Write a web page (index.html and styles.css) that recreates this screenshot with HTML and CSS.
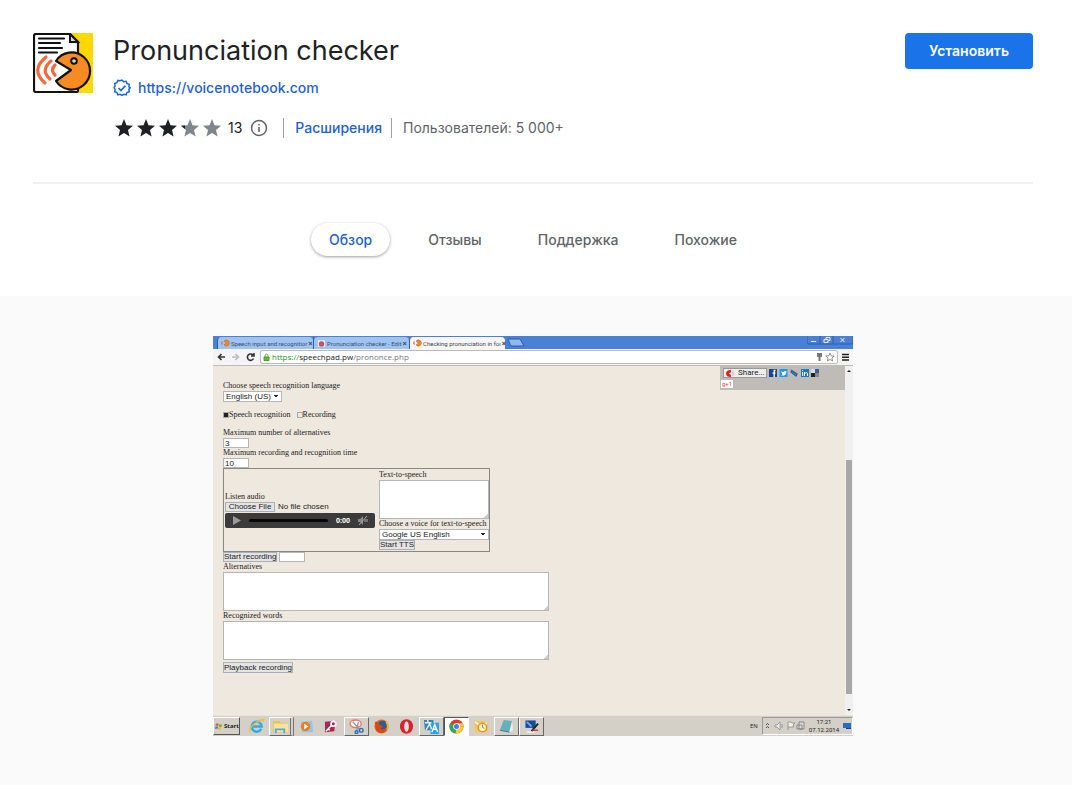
FILE: index.html
```html
<!DOCTYPE html>
<html lang="ru">
<head>
<meta charset="utf-8">
<meta name="viewport" content="width=device-width, initial-scale=1">
<title>Pronunciation checker</title>
<link rel="stylesheet" href="styles.css">
</head>
<body>
<svg class="defs" width="0" height="0" aria-hidden="true">
  <symbol id="star" viewBox="0 0 18 18"><path d="M9 0l2.500 6.200 6.500.5-5 4.300 1.600 6.500L9 14l-5.600 3.500L5 11 0 6.700l6.500-.5z"/></symbol>
  <symbol id="pac" viewBox="0 0 12 10"><path d="M4 2.500A4 4 0 1 1 4 7.500l3-2.500z" fill="#f18a22" stroke="#b35a1a" stroke-width=".6"/><path d="M2 3Q0 5 2 7" fill="none" stroke="#ef6b3c" stroke-width="1.500"/></symbol>
</svg>
<header class="top">
  <div class="item">
    <svg class="logo" viewBox="0 0 60 60" role="img" aria-label="Pronunciation checker">
      <path d="M36 0h24v60H36z" fill="#ffd800"/>
      <path d="M3 1h34l8 8v49q0 1-2 1H3q-2 0-2-2V3q0-2 2-2z" fill="#fff" stroke="#111" stroke-width="2.200"/>
      <path d="M37 1v8h8z" fill="#ddd" stroke="#111" stroke-width="2"/>
      <path d="M6 5.500h25M6 10h21M6 15h23M6 19.500h18" stroke="#111" stroke-width="2.200" stroke-linecap="round"/>
      <path d="M13 24Q-3 37 12 50M18 28Q7 37 17 46M22 32q-5 5 0 10" fill="none" stroke="#ef6b3c" stroke-width="3.200" stroke-linecap="round"/>
      <path d="M23 28a18.500 18.500 0 1 1 0 20l15-11z" fill="#f58b22" stroke="#111" stroke-width="2.200" stroke-linejoin="round"/>
      <circle cx="41" cy="28" r="2.800" fill="#ddd" stroke="#111" stroke-width="2"/>
    </svg>
    <div class="info">
      <h1>Pronunciation checker</h1>
      <a class="site" href="#site">
        <svg width="18" height="18" viewBox="0 0 18 18" fill="none" stroke="#1967d2" stroke-width="1.600"><path d="M9 1l2 1.700 2.500-.4.900 2.400 2.400.9-.4 2.500L18 9l-1.600 2 .4 2.500-2.400.8-.9 2.500-2.500-.5L9 17.500l-2-1.200-2.500.5-.9-2.500-2.400-.8.400-2.500L0.500 9l1.100-1.900-.4-2.500 2.400-.9.900-2.400 2.500.4z" transform="translate(.6 .2) scale(.93)"/><path d="M5.500 9l2.400 2.500L12.500 6.600"/></svg>
        <span>https://voicenotebook.com</span></a>
      <div class="meta">
        <span class="stars" role="img" aria-label="3 из 5">
          <svg><use href="#star"/></svg><svg><use href="#star"/></svg><svg><use href="#star"/></svg><svg viewBox="0 0 18 18"><use class="off" href="#star"/><path d="M0 6.700l4-.3V10z"/></svg><svg class="off"><use href="#star"/></svg>
        </span>
        <span class="count">13</span>
        <button class="about" aria-label="Подробнее"><svg width="18" height="18" viewBox="0 0 18 18"><circle cx="9" cy="9" r="7.500" fill="none" stroke="#5f6368" stroke-width="1.500"/><path d="M8.200 8h1.600v5H8.200zM8.200 5h1.600v1.600H8.200z" fill="#5f6368"/></svg></button>
        <a class="category" href="#extensions">Расширения</a>
        <span class="users">Пользователей: 5 000+</span>
      </div>
    </div>
    <button class="install">Установить</button>
  </div>
  <nav class="tabs">
    <a class="active" href="#overview">Обзор</a><a href="#reviews">Отзывы</a><a href="#support">Поддержка</a><a href="#related">Похожие</a>
  </nav>
</header>
<main class="gallery" id="overview">
  <section class="desktop" aria-label="Speechpad">
    <div class="titlebar">
      <div class="btab"><svg width="9" height="8"><use href="#pac"/></svg><span>Speech input and recognitior</span><b>×</b></div>
      <div class="btab"><svg width="9" height="8" viewBox="0 0 10 8"><path d="M1 1h8v7H1z" fill="#eee"/><circle cx="5" cy="5" r="3" fill="#dd4436"/><circle cx="5" cy="5" r="1.300" fill="#4c86e8"/></svg><span>Pronunciation checker - Edit</span><b>×</b></div>
      <div class="btab current"><svg width="9" height="8"><use href="#pac"/></svg><span>Checking pronunciation in foı</span><b>×</b></div>
      <svg class="newtab" width="18" height="9" viewBox="0 0 18 9"><path d="M1 1h12l4 7H5q-2 0-2-2z" fill="#91b9ef" stroke="#315da8"/></svg>
      <svg class="winbtns" width="46" height="9" viewBox="0 0 46 9" fill="none"><path d="M0 0v6q0 2 2 2h42q2 0 2-2V0M13 0v8M26 0v8" stroke="#2f5fae"/><path d="M4 5.500h5M17 3.500h4v3h-4zM19 3V1.500h4v3h-2M33.500 2l4 4M37.500 2l-4 4" stroke="#e8f0fb"/></svg>
    </div>
    <div class="toolbar">
      <svg width="39" height="10" viewBox="0 0 39 10" fill="none" stroke-width="1.600"><path d="M8 5H1.500M4.500 2l-3 3 3 3" stroke="#333"/><path d="M15 5h6.500M18.500 2l3 3-3 3" stroke="#bbb"/><path d="M36 3A3.200 3.200 0 1 0 36.500 6.500M37 1v3h-3" stroke="#333"/></svg>
      <div class="address">
        <svg width="7" height="8" viewBox="0 0 7 8"><path d="M1 4h5v3.500H1z" fill="#6ab73f" stroke="#4e9b2b"/><path d="M2 4V2q1.500-2 3 0v2" fill="none" stroke="#7ab55c"/></svg>
        <span class="url"><i>https://</i>speechpad.pw<em>/prononce.php</em></span>
        <svg width="20" height="10" viewBox="0 0 20 10"><path d="M2 1h5v4H5.500v4h-2V5H2z" fill="#777"/><path d="M15 1l1.200 2.800 3 .2-2.300 2 .7 3L15 7.400 12.400 9l.7-3-2.300-2 3-.2z" fill="#fff" stroke="#777" stroke-width=".8"/></svg>
      </div>
      <svg width="7" height="8" viewBox="0 0 7 8" stroke="#222" stroke-width="1.500"><path d="M0 1.500h7M0 4.200h7M0 7h7"/></svg>
    </div>
    <div class="viewport">
      <form class="speech">
        <label for="lang">Choose speech recognition language</label>
        <select id="lang" class="lang"><option>English (US)</option></select>
        <div class="checks"><input type="checkbox" id="sr" checked><label for="sr">Speech recognition</label><input type="checkbox" id="rec"><label for="rec">Recording</label></div>
        <label for="alts">Maximum number of alternatives</label>
        <input class="num" id="alts" value="3">
        <label for="time">Maximum recording and recognition time</label>
        <input class="num" id="time" value="10">
        <div class="panel">
          <div class="listen">
            <label for="file">Listen audio</label>
            <div class="filerow"><button type="button" id="file">Choose File</button><span>No file chosen</span></div>
            <div class="player"><svg width="9" height="9" viewBox="0 0 9 9"><path d="M1 0l8 4.500L1 9z" fill="#9b9b9b"/></svg><span class="track"></span><span class="zero">0:00</span><svg width="10" height="9" viewBox="0 0 10 9"><path d="M0 3h2l3-3v9L2 6H0z" fill="#888"/><path d="M1 9L9 0M7 3v3M9 3v3" stroke="#aaa"/></svg></div>
          </div>
          <div class="tts">
            <label for="ttstext">Text-to-speech</label>
            <textarea id="ttstext"></textarea>
            <label for="voice">Choose a voice for text-to-speech</label>
            <select id="voice"><option>Google US English</option></select>
            <button type="button">Start TTS</button>
          </div>
        </div>
        <div class="record"><button type="button">Start recording</button><input class="num" aria-label="Status"></div>
        <label for="a">Alternatives</label>
        <textarea class="wide" id="a"></textarea>
        <label for="w">Recognized words</label>
        <textarea class="wide" id="w"></textarea>
        <button class="playback" type="button">Playback recording</button>
      </form>
      <div class="share">
        <div class="sharerow">
          <button type="button"><svg width="9" height="7" viewBox="0 0 9 7"><path d="M5 0v2L3 3.500 5 5v2Q0 7 0 3.500T5 0z" fill="#d22"/><path d="M7 1v5" stroke="#bbb"/></svg>Share...</button>
          <svg width="50" height="8" viewBox="0 0 50 8"><path d="M0 0h8v8H0z" fill="#1c4394"/><path d="M6.500 1.500H5.200V8M3.500 4.200h3" fill="none" stroke="#fff" stroke-width="1.300"/><path d="M10.500 0h8v8h-8z" fill="#1d9bea"/><path d="M12 2q2 2 3 .5 1-1 2.500 0-.5 4-3 4H12l1.500-1z" fill="#fff"/><path d="M22 1l6 4-1 2-5-4 1-1 4 3" fill="none" stroke="#28649b" stroke-width="1.300"/><path d="M32 0h8v8h-8z" fill="#167abd"/><path d="M33.700 3v4M33.700 1v1M35.500 7V3M35.500 4.500q3-2 3 0V7" fill="none" stroke="#fff"/><path d="M42 0h4v4h-4z" fill="#ddd"/><path d="M46 0h4v4h-4z" fill="#3b5f9b"/><path d="M42 4h4v4h-4z" fill="#222"/><path d="M46 4h4v4h-4z" fill="#888"/></svg>
        </div>
        <span class="plus">g+1</span>
      </div>
      <div class="scroll"><i class="up"></i><span class="thumb"></span><i class="down"></i></div>
    </div>
    <div class="taskbar">
      <button class="start"><svg width="8" height="9" viewBox="0 0 9 9"><path d="M1 1.500q2-1 3 0L3.500 4q-2-1-3 0z" fill="#e2512d"/><path d="M4.600 2q2 1 3.400 0L7.400 4.500q-2 1-3.200 0z" fill="#6aac36"/><path d="M.4 4.700q2-1 3 0L3 7.300q-2-1-3 0z" fill="#3d80d0"/><path d="M4 5.200q2 1 3.200 0L6.600 7.700q-2 1-3.200 0z" fill="#f0b91d"/></svg>Start</button>
      <div class="apps">
        <span><svg viewBox="0 0 16 16"><path d="M13 10.500A5.300 5.300 0 1 1 13.500 8H4" fill="none" stroke="#35a8e5" stroke-width="2.600"/><path d="M1 14Q0 8 9 3t6 0" fill="none" stroke="#f2bd32" stroke-width="1.400"/></svg></span>
        <span class="raised stack"><svg viewBox="0 0 16 16"><path d="M0 2h7l1 2h7v10H0z" fill="#e8c45b"/><path d="M1 5h15v9H1z" fill="#f7e49b"/><path d="M3 15v-4h9v4" fill="none" stroke="#58a6d8" stroke-width="2"/></svg></span>
        <span><svg viewBox="0 0 16 16"><path d="M2 3l12-1 1 12H3z" fill="#91c6eb"/><circle cx="7" cy="8" r="5" fill="#f07b22"/><path d="M5.500 5l4.500 3-4.500 3z" fill="#fff"/></svg></span>
        <span><svg viewBox="0 0 16 16"><path d="M3 1h12v12H3z" fill="#dec6cf"/><path d="M1 3l11-1-1 11-10 1z" fill="#a72852"/><circle cx="10" cy="5" r="2.500" fill="none" stroke="#fff" stroke-width="1.800"/><path d="M8 7l-6 6M4 10l2 2" stroke="#fff" stroke-width="1.600"/></svg></span>
        <span class="raised"><svg viewBox="0 0 16 16"><ellipse cx="7" cy="5" rx="6" ry="4" fill="#fff" stroke="#e67873" stroke-width="1.500"/><path d="M4 3l8 9M10 3L8 13" stroke="#999" stroke-width="1.500"/><circle cx="13" cy="12" r="2" fill="none" stroke="#2673b8" stroke-width="1.500"/><circle cx="8" cy="14" r="1.500" fill="none" stroke="#2673b8" stroke-width="1.500"/></svg></span>
        <span><svg viewBox="0 0 16 16"><circle cx="8" cy="8" r="7.500" fill="#e66b1d"/><circle cx="9" cy="7" r="5.200" fill="#285d9c"/><path d="M1 3q4 0 5 3l4 2-3 2q3 3 7-2-1 7-7 7T1 3z" fill="#d84818"/><path d="M13 3q3 4 1 8" fill="none" stroke="#f4b52b" stroke-width="2"/></svg></span>
        <span><svg viewBox="0 0 16 16"><ellipse cx="8" cy="8" rx="7" ry="7.800" fill="#d8232f"/><ellipse cx="8" cy="8" rx="2.500" ry="5.700" fill="#e9dedb"/></svg></span>
        <span class="raised"><svg viewBox="0 0 16 16"><path d="M0 1h10v11H1z" fill="#3185bd"/><path d="M7 4h9v12H7z" fill="#28a2e8"/><path d="M1 4h7M4 1v3M2 12l4-7 2 6" fill="none" stroke="#eee" stroke-width="1.500"/><path d="M8.500 14l3-8 3 8M9.500 11h4" fill="none" stroke="#fff" stroke-width="1.500"/></svg></span>
        <span class="pressed"><svg viewBox="0 0 16 16"><circle cx="8" cy="8" r="7.500" fill="#e13a2d"/><path d="M8 8L1.500 4.200A7.500 7.500 0 0 0 8 15.500z" fill="#35a653"/><path d="M8 8h7.500A7.500 7.500 0 0 1 7 15.500z" fill="#fbcb31"/><path d="M8 4.500h6.600q1 2 .9 3.500H8z" fill="#fbcb31"/><circle cx="8" cy="8" r="3.500" fill="#fff"/><circle cx="8" cy="8" r="2.700" fill="#3e82ef"/></svg></span>
        <span><svg viewBox="0 0 16 16"><path d="M0 2h11l4 3v9H1z" fill="#f4c664"/><path d="M1 3l7 5 6-4" fill="none" stroke="#fff" stroke-width="1.500"/><circle cx="9" cy="9" r="4.500" fill="#fff3cc" stroke="#e39a20" stroke-width="1.600"/><path d="M9 6v3l2 1" fill="none" stroke="#a87835"/></svg></span>
        <span class="raised"><svg viewBox="0 0 16 16"><path d="M5 1l9 1-3 12-10-2z" fill="#69aebd"/><path d="M14 2l1 10-4 2z" fill="#e9efef"/><path d="M1 12l10 2" stroke="#3e7884"/></svg></span>
        <span class="raised"><svg viewBox="0 0 16 16"><path d="M1 1h12v9H1z" fill="#174a9c" stroke="#ddd"/><path d="M3 3l5 5" stroke="#75a4df" stroke-width="2"/><path d="M3 13h8v2H3z" fill="#eee"/><path d="M15 5L8 13" stroke="#222" stroke-width="2"/><path d="M9 12h6" stroke="#cc3b27" stroke-width="1.500"/></svg></span>
      </div>
      <span class="en">EN</span>
      <div class="tray">
        <svg width="40" height="10" viewBox="0 0 40 10" fill="none"><path d="M1 4l1.500-1.500L4 4M1 7l1.500-1.500L4 7" stroke="#333" stroke-width=".8"/><path d="M10 4h2l3-3v8l-3-3h-2zM17 3v4" fill="#eee" stroke="#888" stroke-width=".8"/><path d="M23 1v8M23 1h3l1 1h3l-2 2 1 2h-6" fill="#eee" stroke="#888" stroke-width=".8"/><path d="M34 1h5v7h-5zM32 4h5v4h-5z" fill="#ddd" stroke="#777" stroke-width=".8"/></svg>
        <time>17:21<br>07.12.2014</time>
        <svg width="8" height="8" viewBox="0 0 8 8"><path d="M0 1h8v5H0z" fill="#256cc2"/><path d="M3 6h5v1H3z" fill="#16437f"/></svg>
      </div>
    </div>
  </section>
</main>
</body>
</html>
```
FILE: styles.css
```css
* { box-sizing: border-box; }
body {
  margin: 0;
  min-height: 100vh;
  display: flex;
  flex-direction: column;
  background: #fff;
  color: #202124;
  font: 14px/20px Inter, "Open Sans", sans-serif;
}
.defs { position: absolute; }
a { color: #1f5fd0; text-decoration: none; }
button, input, select, textarea { font: inherit; color: inherit; }
svg { flex: none; }

.top { padding: 33px 39px 39px 33px; }
.item { display: flex; align-items: flex-start; padding-bottom: 44px; border-bottom: 2px solid #f1f1f1; }
.logo { width: 60px; height: 60px; margin-right: 20px; }
.info { flex: 1; }
h1 { margin: 0; font-size: 27px; line-height: 36px; font-weight: 400; }
.site { display: flex; align-items: center; gap: 7px; margin-top: 9px; font-weight: 500; }
.meta { display: flex; align-items: center; margin-top: 20px; }
.stars { display: flex; gap: 4px; padding: 0 7px 0 2px; }
.stars svg { width: 18px; height: 18px; fill: #202124; }
.stars .off { fill: #80868b; }
.about { display: flex; border: 0; padding: 0; margin: 0 15px 0 8px; background: none; }
.category { border: solid #9aa0a6; border-width: 0 1px; padding: 0 9px 0 11px; font-weight: 500; }
.users { padding-left: 11px; color: #5f6368; }
.install { height: 36px; padding: 0 24px; border: 0; border-radius: 4px; background: #1a73e8; color: #fff; font-weight: 600; }
.tabs { display: flex; justify-content: center; gap: 20px; margin-top: 39px; margin-bottom: 1px; }
.tabs a { padding: 6px 18px; border-radius: 17px; color: #5f6368; font-weight: 500; line-height: 21px; }
.tabs .active { color: #1f5fd0; box-shadow: 0 1px 3px rgba(60, 64, 67, .5); }

.gallery { flex: 1; display: flex; justify-content: center; align-items: flex-start; padding: 40px 39px 40px 33px; background: #fafafa; }
.desktop { flex: 0 1 640px; min-width: 0; overflow: hidden; color: #222; font: 8px/10px "Liberation Serif", serif; }

.titlebar { display: flex; align-items: flex-end; height: 13px; padding-left: 4px; background: #4a80d6; font: 6px/11px Roboto, sans-serif; }
.btab { display: flex; align-items: center; gap: 1px; width: 96px; height: 12px; padding: 0 3px; border-left: 1px solid #315da8; border-radius: 4px 4px 0 0; background: #9fc3f2; color: #3c4f68; }
.btab span { flex: 1; white-space: nowrap; }
.btab b { font-size: 8px; }
.btab.current { background: #f6f6f6; color: #444; }
.newtab { margin: 0 auto 2px 2px; }
.winbtns { align-self: flex-start; }

.toolbar { display: flex; align-items: center; gap: 4px; height: 17px; padding: 0 4px; border-bottom: 1px solid #bbb; background: #f4f4f4; }
.address { display: flex; align-items: center; flex: 1; gap: 2px; height: 14px; padding: 0 2px; border: 1px solid #bbb; border-radius: 2px; background: #fff; }
.url { flex: 1; font: 8px/12px "Open Sans", sans-serif; }
.url i { color: #278b30; font-style: normal; }
.url em { color: #777; font-style: normal; }

.viewport { display: flex; align-items: flex-start; height: 349px; background: #efe8df; }
.speech { display: flex; flex-direction: column; align-items: flex-start; flex: 1; padding: 15px 10px 0; }
.speech button, .speech select, .speech .num, .speech textarea { margin: 0; border: 1px solid #b5b5b5; border-radius: 0; background: #fff; font: 8px/8px "Liberation Sans", sans-serif; }
.speech button { height: 10px; padding: 0; border-color: #aab0b8; background: #e4e4e4; white-space: nowrap; }
.speech select { height: 11px; padding: 0 8px 0 2px; appearance: none; background: conic-gradient(from -35deg at 50% 100%, #222 70deg, transparent 0) right 3px center / 4px 3px no-repeat #fff; }
.speech select { background-image: conic-gradient(from -35deg at 50% 100%, #222 70deg, transparent 0); }
.speech .lang { width: 59px; margin-bottom: 8px; }
.speech .num { width: 26px; height: 10px; padding: 0 1px; }
.speech textarea { display: block; width: 100%; height: 39px; resize: none; background: linear-gradient(135deg, transparent 50%, #ccc 50%) right bottom / 4px 4px no-repeat #fff; }
.speech .wide { width: 326px; }
.checks { display: flex; align-items: center; margin-bottom: 8px; }
.checks input { width: 6px; height: 6px; margin: 0; appearance: none; border: 1px solid #aaa; background: #e8e8e8; }
.checks input:checked { background: #222; }
.checks label + input { margin-left: 6px; }
.panel { display: flex; align-items: center; width: 267px; height: 84px; border: 1px solid #888; }
.listen { width: 155px; padding: 0 4px 0 1px; }
.listen label, .tts label { display: block; }
.filerow { display: flex; gap: 3px; font: 8px/10px "Liberation Sans", sans-serif; }
.filerow button { width: 50px; }
.player { display: flex; align-items: center; gap: 8px; height: 15px; margin-top: 1px; padding: 0 7px; border-radius: 2px; background: #3b3b3b; }
.track { flex: 1; height: 3px; border-radius: 2px; background: #080808; }
.zero { color: #fff; font: bold 7px/10px "Open Sans", sans-serif; }
.tts { flex: 1; }
.tts select { display: block; width: 100%; }
.tts button { display: block; }
.record { display: flex; gap: 2px; }
.speech .playback { height: 11px; margin-top: 2px; }

.share { width: 125px; height: 24px; padding: 2px 1px 0; background: #bfbbb6; }
.sharerow { display: flex; align-items: center; gap: 2px; padding-left: 2px; }
.share button { display: flex; align-items: center; gap: 3px; height: 10px; width: 44px; padding: 0 2px; border: 1px solid #999; background: #eee; font: 8px/8px Roboto, sans-serif; }
.plus { display: block; width: 12px; margin-top: 2px; padding: 0 1px; background: #fff; color: #d33; font: 6px/8px Roboto, sans-serif; }
.scroll { display: flex; flex-direction: column; align-items: center; width: 8px; height: 100%; padding: 4px 1px; background: #f0f0f0; }
.up, .down { border: 2px solid transparent; }
.up { border-top: 0; border-bottom-color: #222; }
.down { border-bottom: 0; border-top-color: #222; margin-top: auto; }
.thumb { width: 6px; height: 234px; margin-top: 88px; background: #a8a8a8; }

.taskbar { display: flex; align-items: center; height: 21px; background: #d4d0c8; border-top: 1px solid #e8e5df; font: 6px/8px "Open Sans", sans-serif; }
.start { display: flex; align-items: center; gap: 1px; width: 27px; height: 18px; margin-right: 4px; padding: 0 1px; border: 1px solid #fff; border-right-color: #555; border-bottom-color: #555; background: #d4d0c8; font-weight: 700; }
.apps { display: flex; margin-right: auto; }
.apps span { display: flex; align-items: center; justify-content: center; width: 25px; height: 19px; border: 1px solid transparent; }
.apps svg { width: 15px; height: 15px; }
.apps .raised { border-color: #fff #666 #666 #fff; }
.apps .stack { border-right: 4px double #777; }
.apps .pressed { border-color: #555 #fff #fff #555; background: #fff; }
.en { padding-right: 4px; }
.tray { display: flex; align-items: center; gap: 4px; height: 18px; padding: 0 1px 0 2px; border: 1px solid #999; border-right-color: #fff; border-bottom-color: #fff; text-align: center; }
.tray time { font: 6px/8px Roboto, sans-serif; }
```
